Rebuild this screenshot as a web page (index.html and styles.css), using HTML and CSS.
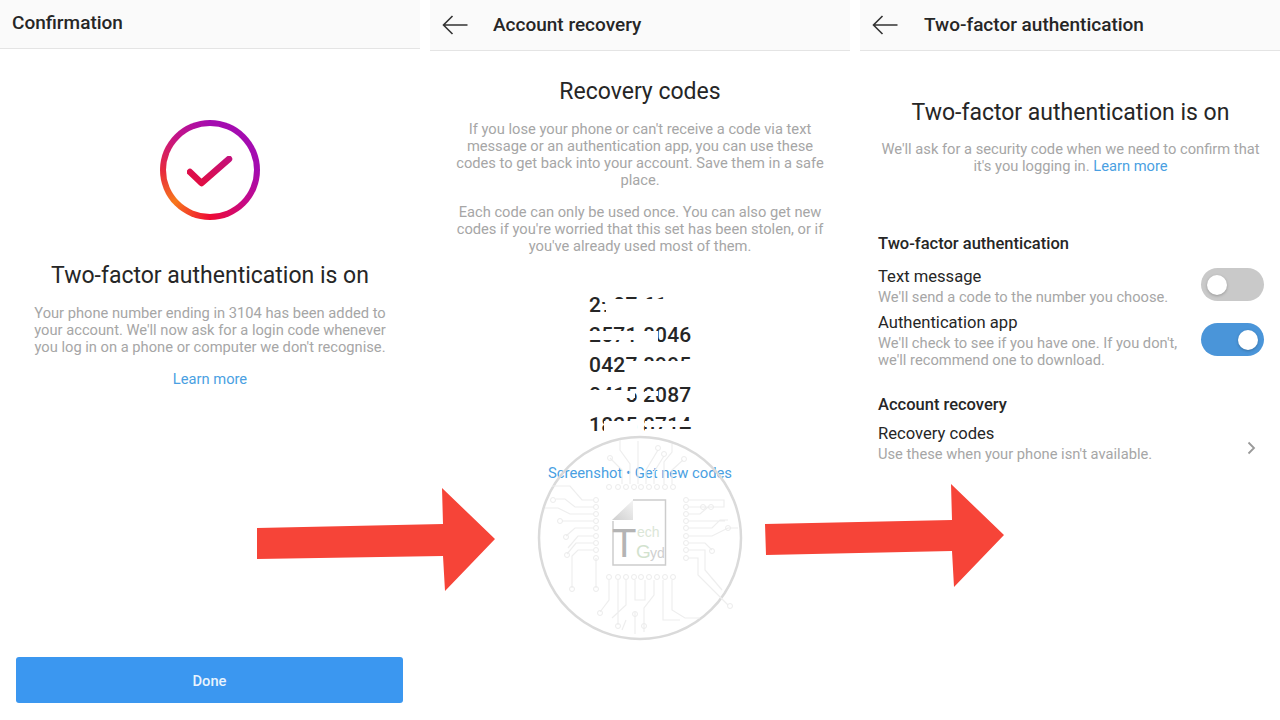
FILE: index.html
```html
<!DOCTYPE html>
<html lang="en">
<head>
    <meta charset="UTF-8">
    <title>Two-factor authentication</title>
    <link rel="stylesheet" href="styles.css">
</head>
<body>
    <div class="screens">
        <!-- Confirmation -->
        <section class="screen">
            <header class="top-bar top-bar-short"><h1>Confirmation</h1></header>
            <div class="confirm-body">
                <div class="ring">
                    <div class="ring-inner">
                        <svg class="check" width="46" height="34" viewBox="0 0 46 34" fill="none">
                            <defs>
                                <linearGradient id="checkFill" x1="0" y1="1" x2="1" y2="0">
                                    <stop offset="0" stop-color="#e40d3c"/>
                                    <stop offset="1" stop-color="#c4107a"/>
                                </linearGradient>
                            </defs>
                            <path d="M3 16 L14.500 27 L42 3" stroke="url(#checkFill)" stroke-width="6.5" stroke-linecap="round" stroke-linejoin="round"/>
                        </svg>
                    </div>
                </div>
                <h2 class="big-title">Two-factor authentication is on</h2>
                <p class="muted">Your phone number ending in 3104 has been added to<br>your account. We'll now ask for a login code whenever<br>you log in on a phone or computer we don't recognise.</p>
                <a class="link learn-link">Learn more</a>
                <button class="done-btn">Done</button>
            </div>
        </section>

        <!-- Account recovery -->
        <section class="screen">
            <header class="top-bar">
                <svg class="back" width="26" height="20" viewBox="0 0 26 20" fill="none"><path d="M25.5 10 H1.5 M10.5 1 L1.5 10 L10.5 19" stroke="#333" stroke-width="1.6"/></svg>
                <h1>Account recovery</h1>
            </header>
            <div class="recovery-body">
                <h2 class="big-title">Recovery codes</h2>
                <p class="muted">If you lose your phone or can't receive a code via text<br>message or an authentication app, you can use these<br>codes to get back into your account. Save them in a safe<br>place.</p>
                <p class="muted second">Each code can only be used once. You can also get new<br>codes if you're worried that this set has been stolen, or if<br>you've already used most of them.</p>
                <div class="codes">
                    <div>2907 6137</div>
                    <div>2571 8046</div>
                    <div>0427 8995</div>
                    <div>0415 2087</div>
                    <div>1825 8714</div>
                </div>
                <p class="code-links"><a class="link">Screenshot</a> • <a class="link">Get new codes</a></p>
            </div>
        </section>

        <!-- Two-factor authentication -->
        <section class="screen screen-settings">
            <header class="top-bar">
                <svg class="back" width="26" height="20" viewBox="0 0 26 20" fill="none"><path d="M25.5 10 H1.5 M10.5 1 L1.5 10 L10.5 19" stroke="#333" stroke-width="1.6"/></svg>
                <h1>Two-factor authentication</h1>
            </header>
            <div class="settings-body">
                <h2 class="big-title">Two-factor authentication is on</h2>
                <p class="muted">We'll ask for a security code when we need to confirm that<br>it's you logging in. <a class="link">Learn more</a></p>

                <h3 class="section-title">Two-factor authentication</h3>
                <div class="row row-text">
                    <div>
                        <div class="row-title">Text message</div>
                        <div class="row-sub">We'll send a code to the number you choose.</div>
                    </div>
                    <div class="toggle"></div>
                </div>
                <div class="row row-app">
                    <div>
                        <div class="row-title">Authentication app</div>
                        <div class="row-sub">We'll check to see if you have one. If you don't,<br>we'll recommend one to download.</div>
                    </div>
                    <div class="toggle on"></div>
                </div>

                <h3 class="section-title recovery-title">Account recovery</h3>
                <div class="row row-codes">
                    <div>
                        <div class="row-title">Recovery codes</div>
                        <div class="row-sub">Use these when your phone isn't available.</div>
                    </div>
                    <svg class="chevron" width="9" height="14" viewBox="0 0 9 14" fill="none"><path d="M1.5 1.5 L7 7 L1.5 12.5" stroke="#999" stroke-width="1.8"/></svg>
                </div>
            </div>
        </section>
    </div>

    <!-- Things drawn on top of the screenshots: redaction, arrows, watermark -->
    <svg class="overlay" width="1280" height="720" viewBox="0 0 1280 720" fill="none">
        <g fill="#fff">
            <rect x="606" y="299" width="96" height="17"/>
            <rect x="601" y="296" width="13" height="6"/>
            <rect x="601" y="304" width="5" height="3"/>
            <rect x="668" y="294" width="34" height="6"/>
            <rect x="586" y="331" width="72" height="9"/>
            <rect x="638" y="331" width="20" height="15"/>
            <rect x="625" y="361" width="76" height="16"/>
            <rect x="586" y="390" width="39" height="14"/>
            <rect x="625" y="391" width="10" height="7"/>
            <rect x="645" y="391" width="13" height="5"/>
            <rect x="604" y="421" width="33" height="10"/>
            <rect x="645" y="421" width="56" height="6"/>
            <rect x="645" y="429" width="56" height="6"/>
            <rect x="586" y="431" width="116" height="6"/>
        </g>

        <path fill="#f64438" d="M257 528 L443 524 L442 488 L495 539 L445 591 L443 556 L257 559 Z"/>
        <path fill="#f64438" d="M765 524 L952 520 L951 484 L1004 535 L954 587 L952 551 L766 555 Z"/>

        <circle cx="640" cy="538" r="101" stroke="#dadada" stroke-width="2.5"/>
        <g stroke="#eeeeee" stroke-width="1.2">
            <!-- top traces -->
            <path d="M622 484 V470 L610 458 M630 484 V464 L620 450 V440 M638 484 V441 M646 484 V470 L658 450 M654 484 V472 L664 456 M664 484 V462 L672 452 V444 M672 484 V470 L683 460"/>
            <!-- left traces -->
            <path d="M593 500 H582 L570 486 H552 M593 507 H575 L565 499 H556 M593 514 H570 L558 508 H545 M593 521 H562 M593 528 H575 L566 536 M593 536 H578 L568 548 M593 543 H576 L567 554 M593 550 H578 L572 556 V588 M596 558 V588"/>
            <!-- right traces -->
            <path d="M689 500 H724 V507 H692 M689 507 H703 M689 514 H700 L708 507 H722 M689 521 H725 M689 528 H712 L720 520 H728 M689 536 H712 L728 528 H738 M689 543 H705 L712 550 M689 550 H705 V570 L722 590 M689 558 H698 V575 L728 605"/>
            <!-- bottom traces -->
            <path d="M609 580 V600 L600 612 M618 580 V625 M626 580 V605 L612 618 M635 580 V600 H645 V580 M654 580 V595 L644 608 V632 M663 580 V620 H680 M672 580 V610 L685 618 H700 M635 612 V634 M626 620 L622 630"/>
        </g>
        <g stroke="#ececec" stroke-width="1">
            <circle cx="609" cy="487" r="2.5"/><circle cx="618" cy="487" r="2.5"/><circle cx="626" cy="487" r="2.5"/><circle cx="634" cy="487" r="2.5"/><circle cx="641" cy="487" r="2.5"/><circle cx="649" cy="487" r="2.5"/><circle cx="657" cy="487" r="2.5"/><circle cx="665" cy="487" r="2.5"/><circle cx="673" cy="487" r="2.5"/>
            <circle cx="609" cy="577" r="2.5"/><circle cx="618" cy="577" r="2.5"/><circle cx="626" cy="577" r="2.5"/><circle cx="634" cy="577" r="2.5"/><circle cx="641" cy="577" r="2.5"/><circle cx="649" cy="577" r="2.5"/><circle cx="657" cy="577" r="2.5"/><circle cx="665" cy="577" r="2.5"/><circle cx="673" cy="577" r="2.5"/>
            <circle cx="596" cy="500" r="2.5"/><circle cx="596" cy="507" r="2.5"/><circle cx="596" cy="514" r="2.5"/><circle cx="596" cy="521" r="2.5"/><circle cx="596" cy="528" r="2.5"/><circle cx="596" cy="536" r="2.5"/><circle cx="596" cy="543" r="2.5"/><circle cx="596" cy="550" r="2.5"/><circle cx="596" cy="558" r="2.5"/>
            <circle cx="686" cy="500" r="2.5"/><circle cx="686" cy="507" r="2.5"/><circle cx="686" cy="514" r="2.5"/><circle cx="686" cy="521" r="2.5"/><circle cx="686" cy="528" r="2.5"/><circle cx="686" cy="536" r="2.5"/><circle cx="686" cy="543" r="2.5"/><circle cx="686" cy="550" r="2.5"/><circle cx="686" cy="558" r="2.5"/>
            <circle cx="610" cy="458" r="2.5"/><circle cx="658" cy="448" r="2.5"/><circle cx="664" cy="454" r="2.5"/><circle cx="684" cy="459" r="2.5"/>
            <circle cx="553" cy="500" r="2.5"/><circle cx="560" cy="521" r="2.5"/><circle cx="566" cy="537" r="2.5"/><circle cx="567" cy="555" r="2.5"/><circle cx="596" cy="589" r="2.5"/><circle cx="572" cy="589" r="2.5"/>
            <circle cx="703" cy="507" r="2.5"/><circle cx="711" cy="507" r="2.5"/><circle cx="728" cy="528" r="2.5"/><circle cx="712" cy="551" r="2.5"/><circle cx="730" cy="606" r="2.5"/><circle cx="600" cy="613" r="2.5"/><circle cx="618" cy="626" r="2.5"/><circle cx="635" cy="614" r="2.5"/><circle cx="644" cy="626" r="2.5"/>
        </g>
        <defs>
            <linearGradient id="foldFill" x1="1" y1="0" x2="0" y2="1">
                <stop offset="0" stop-color="#f4f4f4"/>
                <stop offset="1" stop-color="#cfcfcf"/>
            </linearGradient>
        </defs>
        <path d="M633 500 H665.500 V565 H613 V521" stroke="#cdcdcd" stroke-width="1.5"/>
        <path d="M612 520 L633 500 V520 Z" fill="url(#foldFill)"/>
        <text class="mark mark-t" x="612" y="557">T</text>
        <text class="mark mark-ech" x="637" y="537">ech</text>
        <text class="mark mark-g" x="636" y="558">G</text>
        <text class="mark mark-yd" x="650" y="558">yd</text>
    </svg>
</body>
</html>
```

FILE: styles.css
```css
* {
    box-sizing: border-box;
    margin: 0;
    padding: 0;
}

html, body {
    height: 720px;
    overflow: hidden;
}

body {
    position: relative;
    font-family: Roboto, "Liberation Sans", sans-serif;
    background: #fff;
    color: #262626;
}

.screens {
    display: grid;
    grid-template-columns: 420px 420px 420px;
    gap: 10px;
    height: 720px;
}

.screen {
    display: flex;
    flex-direction: column;
    height: 720px;
}

.top-bar {
    display: flex;
    align-items: center;
    height: 51px;
    padding-left: 12px;
    background: #fafafa;
    border-bottom: 1px solid #e4e4e4;
    flex-shrink: 0;
}

.top-bar-short {
    height: 49px;
    padding-bottom: 1px;
}

.top-bar h1 {
    padding-bottom: 2px;
    font-size: 19px;
    font-weight: 500;
    color: #262626;
}

.back {
    margin-right: 25px;
}

.screen-settings .back {
    margin-right: 26px;
}

.big-title {
    font-size: 23px;
    font-weight: 400;
    line-height: 28px;
    text-align: center;
    color: #262626;
}

.muted {
    font-size: 14.700px;
    line-height: 17px;
    color: #a6a6a6;
    text-align: center;
}

.link {
    color: #4a9fe2;
}

/* first screen */
.confirm-body {
    display: flex;
    flex-direction: column;
    align-items: center;
    flex: 1;
    padding: 71px 16px 17px;
}

.ring {
    width: 100px;
    height: 100px;
    padding: 6px;
    border-radius: 50%;
    background: conic-gradient(#a40cb0 0deg, #a40cb0 90deg, #c40a8a 130deg, #ee0b34 180deg, #f7781c 228deg, #e82a3c 268deg, #c41488 315deg, #a40cb0 360deg);
}

.ring-inner {
    display: flex;
    align-items: center;
    justify-content: center;
    width: 88px;
    height: 88px;
    border-radius: 50%;
    background: #fff;
}

.check {
    margin-top: 6px;
}

.confirm-body .big-title {
    margin-top: 42px;
}

.confirm-body .muted {
    margin-top: 15px;
}

.learn-link {
    margin-top: 15px;
    font-size: 14.700px;
    line-height: 17px;
}

.done-btn {
    align-self: flex-start;
    margin-top: auto;
    width: 387px;
    height: 46px;
    padding-top: 1px;
    flex-shrink: 0;
    background: #3b97f0;
    color: #e8f3fd;
    border: none;
    border-radius: 3px;
    font-family: inherit;
    font-size: 14.700px;
    font-weight: 500;
}

/* second screen */
.recovery-body {
    padding-top: 27px;
}

.recovery-body .muted {
    margin-top: 15px;
}

.codes {
    margin-top: 35px;
    padding-left: 159px;
    font-size: 21px;
    font-weight: 500;
    line-height: 30px;
    letter-spacing: 0.2px;
    color: #262626;
}

.code-links {
    margin-top: 25px;
    text-align: center;
    font-size: 14.800px;
    line-height: 17px;
    color: #4a9fe2;
}

/* third screen */
.settings-body {
    padding: 48px 17px 0 18px;
}

.settings-body .muted {
    margin: 14px -10px 0;
}

.section-title {
    margin-top: 59px;
    font-size: 16.500px;
    font-weight: 500;
    line-height: 20px;
}

.recovery-title {
    margin-top: 26px;
}

.row {
    display: flex;
    align-items: flex-start;
    justify-content: space-between;
}

.row-text {
    margin-top: 11px;
}

.row-app {
    margin-top: 5px;
}

.row-codes {
    margin-top: 7px;
    align-items: center;
}

.row-title {
    font-size: 16.600px;
    line-height: 24px;
}

.row-sub {
    font-size: 14.700px;
    line-height: 17px;
    color: #a6a6a6;
}

.toggle {
    position: relative;
    width: 63px;
    height: 33px;
    margin-top: 3px;
    margin-right: -1px;
    border-radius: 17px;
    background: #c9c9c9;
    flex-shrink: 0;
}

.toggle::after {
    content: "";
    position: absolute;
    top: 7px;
    left: 6px;
    width: 20px;
    height: 20px;
    border-radius: 50%;
    background: #fff;
    box-shadow: 0 1px 3px rgba(0,0,0,0.25);
}

.toggle.on {
    background: #4a95d9;
    margin-top: 12px;
}

.toggle.on::after {
    left: auto;
    right: 6px;
}

.chevron {
    margin-right: 7px;
    margin-top: 11px;
}

/* overlay */
.overlay {
    position: absolute;
    top: 0;
    left: 0;
    pointer-events: none;
}

.mark {
    font-family: "Liberation Sans", sans-serif;
}

.mark-t {
    font-size: 40px;
    fill: #b4b4b4;
}

.mark-ech {
    font-size: 14px;
    fill: #dbe6d7;
}

.mark-g {
    font-size: 19px;
    fill: #d2e2ce;
}

.mark-yd {
    font-size: 14px;
    fill: #cfcfcf;
}
```
